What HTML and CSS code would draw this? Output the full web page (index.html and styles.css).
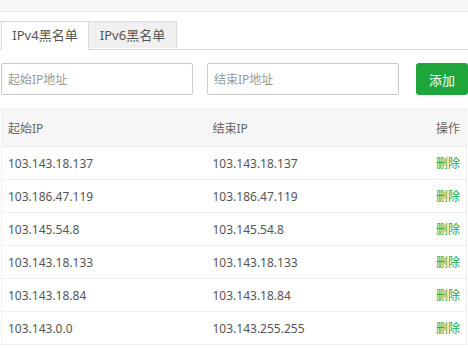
FILE: index.html
```html
<!DOCTYPE html>
<html lang="zh-cn">
<head>
    <meta charset="UTF-8">
    <title>IP黑名单</title>
    <link rel="stylesheet" href="styles.css">
</head>
<body>
    <div class="topbar"></div>

    <div class="tabs">
        <span class="tab active">IPv4黑名单</span>
        <span class="tab">IPv6黑名单</span>
    </div>

    <div class="form-row">
        <input class="ip-input" type="text" placeholder="起始IP地址">
        <input class="ip-input" type="text" placeholder="结束IP地址">
        <button class="btn-add">添加</button>
    </div>

    <table class="ip-table">
        <thead>
            <tr>
                <th class="col-start">起始IP</th>
                <th>结束IP</th>
                <th class="col-op">操作</th>
            </tr>
        </thead>
        <tbody>
            <tr><td>103.143.18.137</td><td>103.143.18.137</td><td class="col-op"><a class="del">删除</a></td></tr>
            <tr><td>103.186.47.119</td><td>103.186.47.119</td><td class="col-op"><a class="del">删除</a></td></tr>
            <tr><td>103.145.54.8</td><td>103.145.54.8</td><td class="col-op"><a class="del">删除</a></td></tr>
            <tr><td>103.143.18.133</td><td>103.143.18.133</td><td class="col-op"><a class="del">删除</a></td></tr>
            <tr><td>103.143.18.84</td><td>103.143.18.84</td><td class="col-op"><a class="del">删除</a></td></tr>
            <tr><td>103.143.0.0</td><td>103.143.255.255</td><td class="col-op"><a class="del">删除</a></td></tr>
        </tbody>
    </table>
</body>
</html>
```

FILE: styles.css
```css
* {
    margin: 0;
    padding: 0;
    box-sizing: border-box;
}

body {
    font-family: "Noto Sans", "Noto Sans CJK SC", sans-serif;
    font-size: 12px;
    color: #555;
    background-color: #fff;
    overflow: hidden;
}

/* faixa cinza do topo */
.topbar {
    height: 12px;
    background-color: #f6f6f6;
    border-bottom: 1px solid #e6e6e6;
}

.tabs {
    display: flex;
    margin-top: 9px;
    padding-left: 1px;
    border-bottom: 1px solid #d9d9e0;
}

.tab {
    width: 88px;
    height: 28px;
    line-height: 27px;
    text-align: center;
    font-size: 13px;
    color: #555;
    background-color: #f0f0f0;
    border: 1px solid #d9d9e0;
    border-bottom: none;
    margin-bottom: -1px;
}

.tab + .tab {
    border-left: none;
    height: 27px;
}

.tab.active {
    background-color: #fff;
    height: 29px;
}

.form-row {
    display: flex;
    align-items: center;
    margin-top: 13px;
    padding-left: 1px;
}

.ip-input {
    width: 192px;
    height: 32px;
    padding: 0 6px;
    border: 1px solid #ccc;
    border-radius: 2px;
    font-family: inherit;
    font-size: 12px;
    color: #555;
    outline: none;
}

.ip-input::placeholder {
    color: #999;
}

.ip-input + .ip-input {
    margin-left: 14px;
}

.btn-add {
    margin-left: 17px;
    width: 52px;
    height: 32px;
    border: none;
    border-radius: 3px;
    background-color: #20a53a;
    color: #fff;
    font-family: inherit;
    font-size: 13px;
    cursor: pointer;
}

.ip-table {
    margin-top: 13px;
    margin-left: 1px;
    width: 466px;
    border-collapse: collapse;
    border: 1px solid #eee;
}

.ip-table th {
    height: 38px;
    background-color: #f6f6f6;
    font-weight: normal;
    text-align: left;
    color: #666;
    padding: 0 6px;
}

.ip-table td {
    height: 33px;
    padding: 0 6px;
    border-top: 1px solid #eee;
}

.ip-table .col-start {
    width: 205px;
}

.ip-table .col-op {
    text-align: right;
}

.del {
    color: #20a53a;
    cursor: pointer;
}
```
